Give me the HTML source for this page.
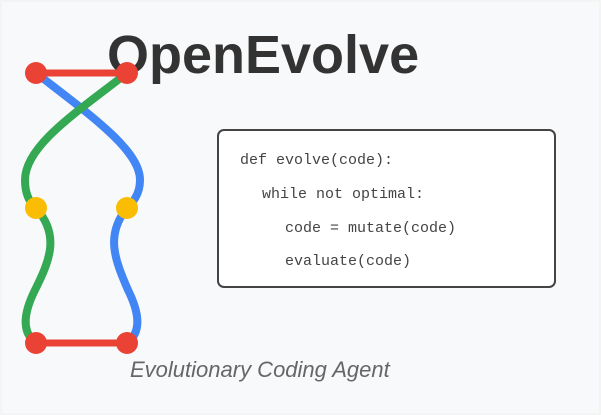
<!DOCTYPE html>
<html><head><style>
html,body{margin:0;padding:0;background:#fff}
#c{position:relative;width:601px;height:415px;overflow:hidden;background:#f8f9fa;}
</style></head><body><div id="c">
<svg width="601" height="415" style="position:absolute;left:0;top:0">
<rect x="1" y="1" width="599" height="413" fill="#f8f9fa" stroke="#eee" stroke-width="1"/>
<text x="107" y="73" font-family="Liberation Sans, sans-serif" font-weight="bold" font-size="54" fill="#333">OpenEvolve</text>
<g fill="none" stroke-width="8" stroke-linecap="round">
<path d="M36,73 C90,115 140,150 140,180 C140,195 132,203 127,208" stroke="#4285f4"/>
<path d="M127,73 C80,110 25,145 25,180 C25,195 30,203 36,208" stroke="#34a853"/>
<path d="M36,208 C60,235 50,260 35,290 C20,320 25,335 36,343" stroke="#34a853"/>
<path d="M127,208 C105,235 115,260 128,290 C143,320 138,335 127,343" stroke="#4285f4"/>
<path d="M36,73 H127 M36,343 H127" stroke="#ea4335" stroke-width="7"/>
</g>
<g fill="#ea4335"><circle cx="36" cy="73" r="11"/><circle cx="127" cy="73" r="11"/><circle cx="36" cy="343" r="11"/><circle cx="127" cy="343" r="11"/></g>
<g fill="#fbbc04"><circle cx="36" cy="208" r="11"/><circle cx="127" cy="208" r="11"/></g>
<rect x="218" y="130" width="337" height="157" rx="6" fill="#fff" stroke="#444" stroke-width="2"/>
<g font-family="Liberation Mono, monospace" font-size="15" fill="#444">
<text x="240" y="164">def evolve(code):</text>
<text x="262" y="198">while not optimal:</text>
<text x="285" y="232">code = mutate(code)</text>
<text x="285" y="265">evaluate(code)</text>
</g>
<text x="130" y="377" font-family="Liberation Sans, sans-serif" font-style="italic" font-size="22" fill="#666">Evolutionary Coding Agent</text>
</svg>
</div></body></html>
